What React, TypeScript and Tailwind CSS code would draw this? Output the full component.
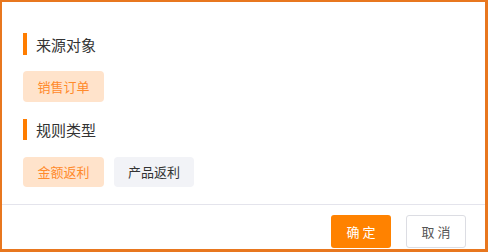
export default function App() {
  const ruleTypes = ['金额返利', '产品返利'];
  const active = '金额返利';

  return (
    <div
      className="flex h-[252px] w-[488px] flex-col border-2 border-r-[3px] border-b-[3px] border-[#e8771f] bg-white text-[#333]"
      style={{ fontFamily: '"Noto Sans CJK SC", "Noto Sans", sans-serif' }}
    >
      <div className="flex flex-col pl-[21px] pt-[31px]">
        {/* 来源对象 */}
        <div className="flex h-[22px] items-center gap-[9px]">
          <span className="h-[22px] w-[4px] bg-[#ff7d00]" />
          <span className="text-[15px] leading-none">来源对象</span>
        </div>
        <div className="mt-[16px] flex">
          <button className="flex h-[31px] w-[81px] items-center justify-center rounded-[4px] bg-[#ffe3cb] text-[13px] text-[#ff8a2b]">
            销售订单
          </button>
        </div>

        {/* 规则类型 */}
        <div className="mt-[17px] flex h-[21px] items-center gap-[9px]">
          <span className="h-[21px] w-[4px] bg-[#ff7d00]" />
          <span className="text-[15px] leading-none">规则类型</span>
        </div>
        <div className="mt-[17px] flex gap-[10px]">
          {ruleTypes.map((t) => (
            <button
              key={t}
              className={
                t === active
                  ? 'flex h-[30px] w-[81px] items-center justify-center rounded-[4px] bg-[#ffe3cb] text-[13px] text-[#ff8a2b]'
                  : 'flex h-[30px] w-[80px] items-center justify-center rounded-[4px] bg-[#f2f3f7] text-[13px] text-[#333]'
              }
            >
              {t}
            </button>
          ))}
        </div>
      </div>

      <div className="mt-[17px] h-px bg-[#e4e4ec]" />

      <div className="flex flex-1 items-start justify-end gap-[15px] pr-[19px] pt-[10px]">
        <button className="flex h-[33px] w-[60px] items-center justify-center rounded-[3px] bg-[#ff8200] text-[13px] text-white">
          确 定
        </button>
        <button className="flex h-[33px] w-[60px] items-center justify-center rounded-[3px] border border-[#dcdde3] bg-white text-[13px] text-[#555]">
          取 消
        </button>
      </div>
    </div>
  );
}
